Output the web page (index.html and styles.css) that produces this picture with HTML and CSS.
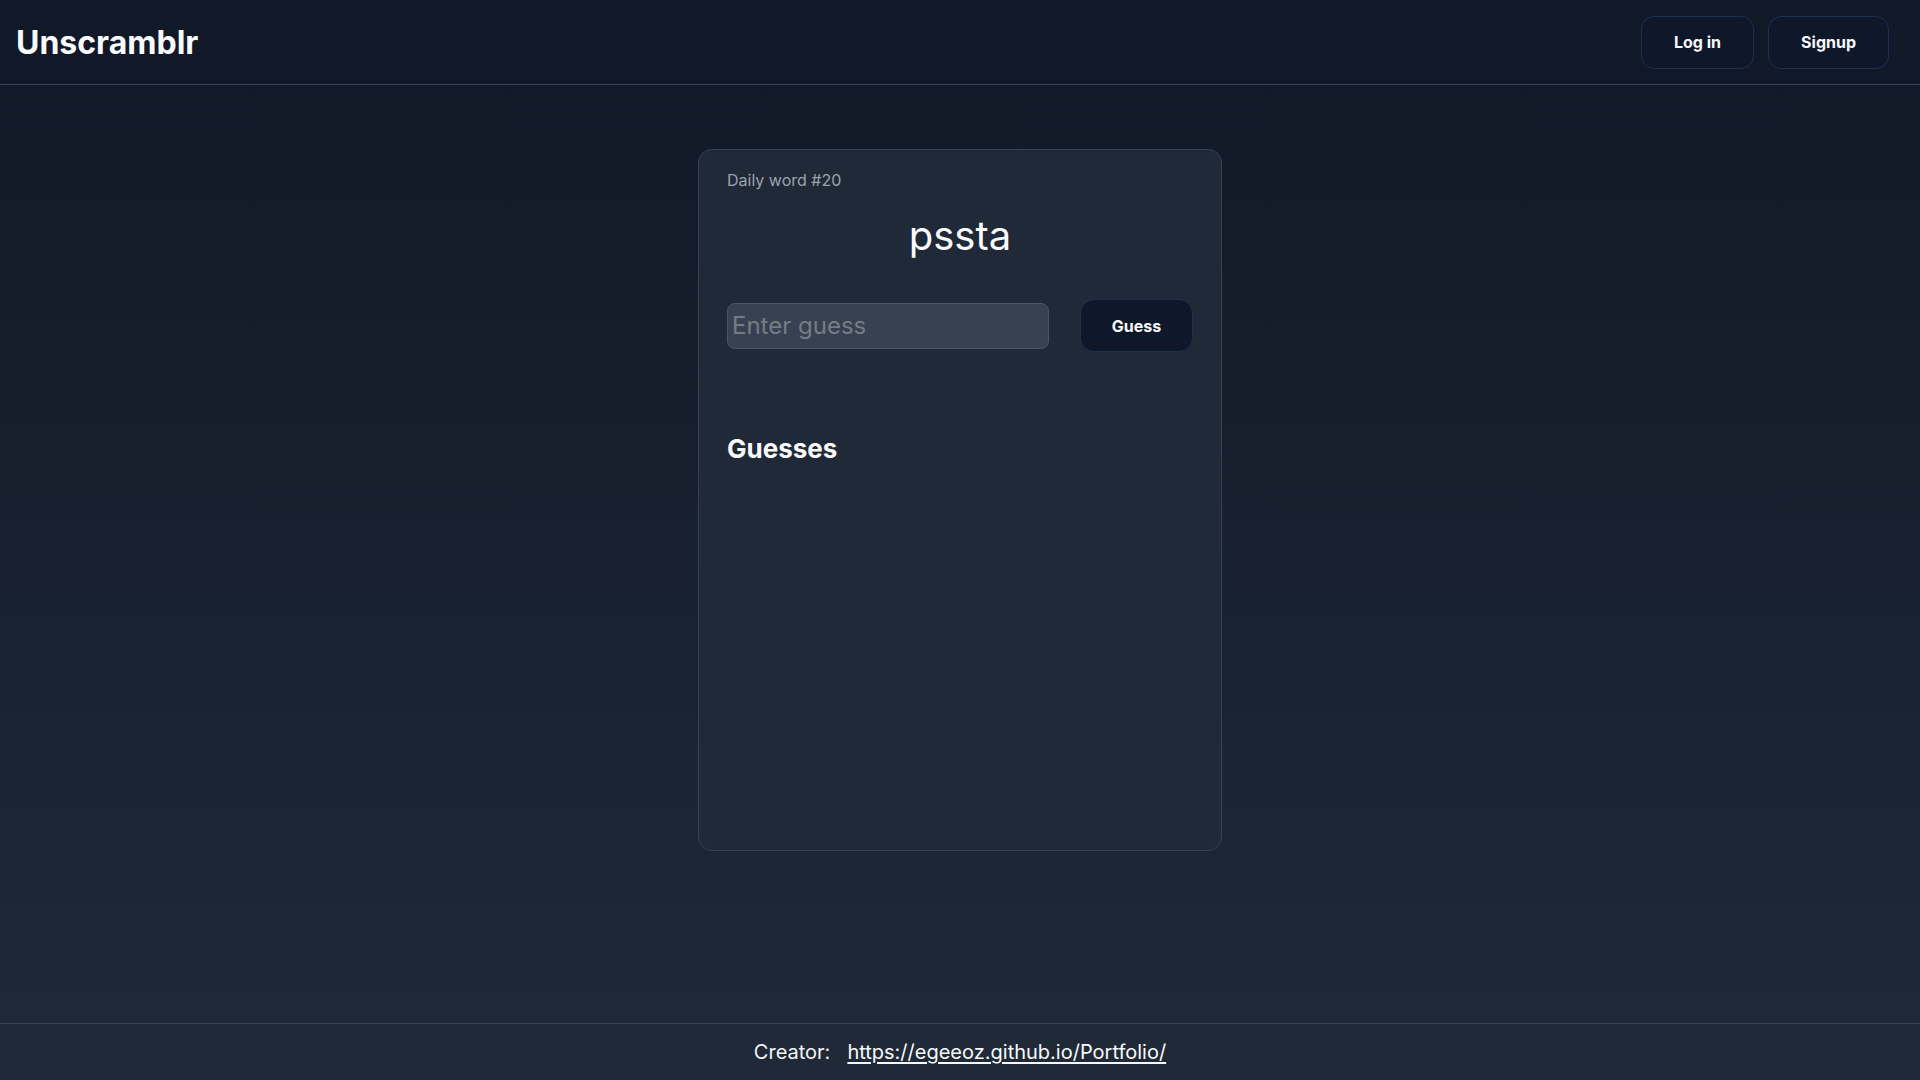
FILE: index.html
```html
<!DOCTYPE html>
<html lang="en">
<head>
<meta charset="utf-8">
<title>Unscramblr</title>
<link rel="stylesheet" href="styles.css">
</head>
<body>
  <header class="topbar">
    <div class="logo">Unscramblr</div>
    <nav class="auth">
      <button class="btn btn-header">Log in</button>
      <button class="btn btn-header">Signup</button>
    </nav>
  </header>
  <main class="main">
    <section class="card">
      <div class="daily">Daily word #20</div>
      <div class="word">pssta</div>
      <form class="guess-row" onsubmit="return false;">
        <input class="guess-input" type="text" placeholder="Enter guess">
        <button class="btn btn-guess" type="submit">Guess</button>
      </form>
      <h2 class="guesses-title">Guesses</h2>
      <div class="guesses-list"></div>
    </section>
  </main>
  <footer class="footer">
    <span class="creator">Creator:</span>
    <a class="creator-link" href="#">https://egeeoz.github.io/Portfolio/</a>
  </footer>
</body>
</html>
```
FILE: styles.css
```css
* { box-sizing: border-box; }
html, body { margin: 0; padding: 0; }
body {
  min-height: 100vh;
  display: flex;
  flex-direction: column;
  background: linear-gradient(to bottom, #111827 0%, #1f2937 100%);
  color: #f9fafb;
  font-family: Inter, "Noto Sans", sans-serif;
}
.topbar {
  height: 85px;
  border-bottom: 1px solid #374151;
  display: flex;
  align-items: center;
  justify-content: space-between;
  padding: 0 31px 0 16px;
  background: #111827;
}
.logo {
  font-size: 32px;
  font-weight: 700;
  color: #f9fafb;
}
.auth { display: flex; gap: 14px; }
.btn {
  font-family: Inter, "Noto Sans", sans-serif;
  font-weight: 700;
  color: #f9fafb;
  background: #0f172a;
  border: 1px solid #1e3050;
  cursor: pointer;
}
.btn-header {
  height: 53px;
  padding: 0 32px;
  font-size: 16px;
  border-radius: 13px;
}
.main {
  flex: 1;
  display: flex;
  justify-content: center;
  align-items: flex-start;
  padding-top: 64px;
}
.card {
  width: 524px;
  min-height: 702px;
  background: #1f2937;
  border: 1px solid #374151;
  border-radius: 14px;
  padding: 18px 28px 28px;
}
.daily {
  font-size: 16px;
  line-height: 24px;
  color: #9ca3af;
}
.word {
  margin-top: 20px;
  text-align: center;
  font-size: 40px;
  line-height: 48px;
  color: #f9fafb;
}
.guess-row {
  margin: 39px 0 0;
  display: flex;
  align-items: center;
  gap: 31px;
}
.guess-input {
  flex: 1;
  min-width: 0;
  height: 46px;
  background: #374151;
  border: 1px solid #4b5563;
  border-radius: 8px;
  padding: 0 4px;
  font-family: Inter, "Noto Sans", sans-serif;
  font-size: 24px;
  color: #f9fafb;
  outline: none;
}
.guess-input::placeholder { color: #767c86; }
.btn-guess {
  width: 113px;
  height: 53px;
  font-size: 16px;
  border-radius: 14px;
}
.guesses-title {
  margin: 79px 0 0;
  font-size: 26px;
  line-height: 36px;
  font-weight: 700;
  color: #f9fafb;
}
.footer {
  height: 57px;
  border-top: 1px solid #374151;
  background: #1f2937;
  display: flex;
  align-items: center;
  justify-content: center;
  font-size: 20px;
  color: #f3f4f6;
}
.creator { margin-right: 17px; }
.creator-link {
  color: #f9fafb;
  text-decoration: underline;
  text-underline-offset: 3px;
}
```
